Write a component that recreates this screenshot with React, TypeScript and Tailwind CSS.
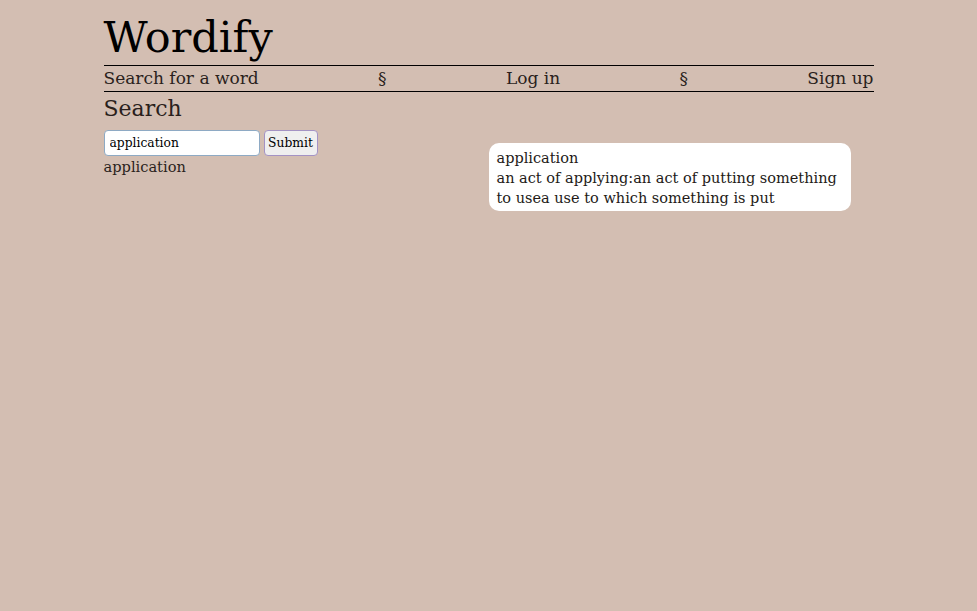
import React from 'react'

const serif = { fontFamily: '"DejaVu Serif", "Liberation Serif", serif' }

export default function App () {
  return (
    <div className="min-h-[611px] w-full bg-[#d3beb2] text-[#2a1f1c]" style={serif}>
      <div className="mx-auto w-[770px]">
        <h1 className="pt-[10px] text-[43px] leading-[55px] text-black">Wordify</h1>
        <nav className="flex justify-between border-y border-black text-[17px] leading-[25px]">
          <span>Search for a word</span>
          <span>§</span>
          <span>Log in</span>
          <span>§</span>
          <span>Sign up</span>
        </nav>
        <h2 className="mt-[2px] text-[22px] leading-[30px]">Search</h2>
        <div className="grid grid-cols-2">
          <div>
            <form className="mt-[6px] flex gap-[4px]" onSubmit={e => e.preventDefault()}>
              <input
                defaultValue="application"
                className="h-[26px] w-[156px] rounded-[4px] border border-[#8eaac4] bg-white px-[5px] text-[12.3px] text-black outline-none"
              />
              <button className="h-[26px] w-[54px] rounded-[4px] border border-[#a493c4] bg-[#efefef] text-[12.3px] text-black">
                Submit
              </button>
            </form>
            <p className="text-[14.6px] leading-[22px]">application</p>
          </div>
          <div className="pt-[19px]">
            <div className="w-[362px] rounded-[10px] bg-white px-[8px] pt-[5px] pb-[3px] text-[14.5px] leading-[20px] text-[#231a17]">
              <p>application</p>
              <p>an act of applying:an act of putting something to usea use to which something is put</p>
            </div>
          </div>
        </div>
      </div>
    </div>
  )
}
